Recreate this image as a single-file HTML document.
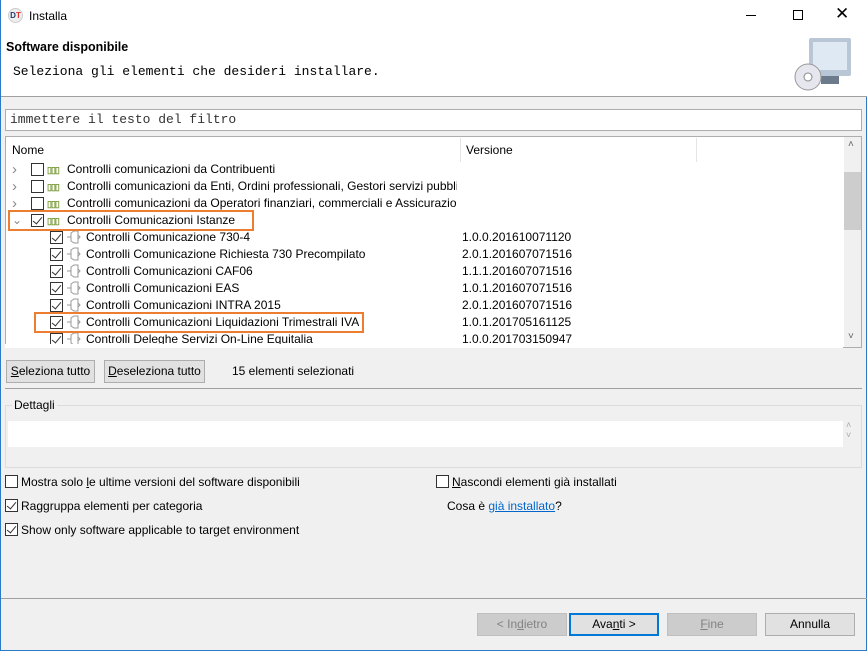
<!DOCTYPE html>
<html><head><style>
*{box-sizing:border-box;margin:0;padding:0}
body{width:867px;height:651px;overflow:hidden;background:#f0f0f0;font-family:"Liberation Sans",sans-serif;font-size:12px;color:#000;position:relative;border:1px solid #2b79c9;border-top:none}
.abs{position:absolute}
.cb{position:absolute;width:13px;height:13px;border:1px solid #333;background:#fff}
.cb.on::after{content:"";position:absolute;left:3px;top:0px;width:4px;height:8px;border:solid #333;border-width:0 1.5px 1.5px 0;transform:rotate(40deg)}
.row{position:absolute;height:17px;line-height:17px;white-space:nowrap}
.btn{position:absolute;height:23px;border:1px solid #adadad;background:#e1e1e1;text-align:center;line-height:21px}
</style></head><body>
<div class="abs" style="left:0;top:0;width:867px;height:97px;background:#fff;border-bottom:1px solid #a0a0a0"></div>
<div class="abs" style="left:7px;top:8px;width:15px;height:15px;border-radius:50%;background:#eee;border:1px solid #ccc;font-size:8px;font-weight:bold;line-height:13px;text-align:center;color:#1a3c6e">D<span style="color:#d33">T</span></div>
<div class="abs" style="left:28px;top:9px;font-size:12px">Installa</div>
<div class="abs" style="left:745px;top:15px;width:10px;height:1px;background:#000"></div>
<div class="abs" style="left:792px;top:10px;width:10px;height:10px;border:1px solid #000"></div>
<div class="abs" style="left:834px;top:4px;font-size:17px;line-height:20px">✕</div>
<div class="abs" style="left:5px;top:40px;font-weight:bold;font-size:12.5px">Software disponibile</div>
<div class="abs" style="left:12px;top:64px;font-family:'Liberation Mono',monospace;font-size:13px">Seleziona gli elementi che desideri installare.</div>
<svg class="abs" style="left:790px;top:34px" width="60" height="60"><rect x="18" y="4" width="42" height="38" rx="2" fill="#b9c6d6"/><rect x="22" y="8" width="34" height="28" fill="#dfe9f4"/><rect x="30" y="42" width="18" height="8" fill="#6b7b8c"/><circle cx="17" cy="43" r="13" fill="#e6e6ef" stroke="#999"/><circle cx="17" cy="43" r="4" fill="#fff" stroke="#888"/></svg>
<div class="abs" style="left:4px;top:109px;width:857px;height:22px;background:#fff;border:1px solid #adadad;font-family:'Liberation Mono',monospace;font-size:13px;line-height:20px;padding-left:4px;color:#333">immettere il testo del filtro</div>
<div class="abs" style="left:4px;top:136px;width:857px;height:212px;background:#fff;border:1px solid #adadad;overflow:hidden">
 <div class="abs" style="left:6px;top:6px">Nome</div>
 <div class="abs" style="left:454px;top:1px;width:1px;height:24px;background:#e5e5e5"></div>
 <div class="abs" style="left:460px;top:6px">Versione</div>
 <div class="abs" style="left:690px;top:1px;width:1px;height:24px;background:#e5e5e5"></div>
 <div class="abs" style="left:838px;top:0;width:17px;height:210px;background:#f0f0f0"></div>
 <div class="abs" style="left:838px;top:35px;width:17px;height:58px;background:#cdcdcd"></div>
 <div class="abs" style="left:842px;top:2px;font-size:10px;color:#606060">˄</div>
 <div class="abs" style="left:842px;top:194px;font-size:10px;color:#606060">˅</div>
</div>
<div id="tree"></div>
<div class="abs" style="left:7px;top:210px;width:246px;height:21px;border:2px solid #ed7d31"></div>
<div class="abs" style="left:33px;top:312px;width:330px;height:21px;border:2px solid #ed7d31"></div>
<script>
var rows=[
[0,'›',0,'Controlli comunicazioni da Contribuenti',''],
[0,'›',0,'Controlli comunicazioni da Enti, Ordini professionali, Gestori servizi pubbli',''],
[0,'›',0,'Controlli comunicazioni da Operatori finanziari, commerciali e Assicurazion',''],
[0,'⌄',1,'Controlli Comunicazioni Istanze',''],
[1,'',1,'Controlli Comunicazione 730-4','1.0.0.201610071120'],
[1,'',1,'Controlli Comunicazione Richiesta 730 Precompilato','2.0.1.201607071516'],
[1,'',1,'Controlli Comunicazioni CAF06','1.1.1.201607071516'],
[1,'',1,'Controlli Comunicazioni EAS','1.0.1.201607071516'],
[1,'',1,'Controlli Comunicazioni INTRA 2015','2.0.1.201607071516'],
[1,'',1,'Controlli Comunicazioni Liquidazioni Trimestrali IVA','1.0.1.201705161125'],
[1,'',1,'Controlli Deleghe Servizi On-Line Equitalia','1.0.0.201703150947']];
var h='';
rows.forEach(function(r,i){var y=161+i*17+(i==10?0:0);var x=r[0]?49:30;
if(r[1])h+='<div class="row" style="left:11px;top:'+y+'px;color:#888;font-size:'+(r[1]=='›'?'15px':'12px')+'">'+r[1]+'</div>';
h+='<div class="cb'+(r[2]?' on':'')+'" style="left:'+x+'px;top:'+(y+2)+'px"></div>';
if(r[0])h+='<svg class="abs" style="left:'+(x+16)+'px;top:'+(y+1)+'px" width="16" height="14"><path d="M1 7h4M5 3l3-2h4v12h-4l-3-2z" fill="none" stroke="#999"/><path d="M12 5l2 2-2 2" fill="none" stroke="#999"/></svg>';
else h+='<div class="abs" style="left:'+(x+16)+'px;top:'+(y+4)+'px;font-size:9px;letter-spacing:-1px;color:#7a9a3a;font-weight:bold">▯▯▯</div>';
h+='<div class="row" style="left:'+(r[0]?85:66)+'px;top:'+y+'px;max-width:'+(456-(r[0]?85:66))+'px;overflow:hidden">'+r[3]+'</div>';
if(r[4])h+='<div class="row" style="left:461px;top:'+y+'px">'+r[4]+'</div>';});
document.getElementById('tree').innerHTML=h;
</script>
<div class="abs" style="left:4px;top:344px;width:838px;height:4px;background:#fff"></div>
<div class="btn" style="left:5px;top:360px;width:89px"><u>S</u>eleziona tutto</div>
<div class="btn" style="left:103px;top:360px;width:101px"><u>D</u>eseleziona tutto</div>
<div class="abs" style="left:231px;top:364px">15 elementi selezionati</div>
<div class="abs" style="left:4px;top:388px;width:857px;height:1px;background:#a0a0a0"></div>
<div class="abs" style="left:4px;top:405px;width:857px;height:63px;border:1px solid #dcdcdc"></div>
<div class="abs" style="left:11px;top:398px;background:#f0f0f0;padding:0 2px">Dettagli</div>
<div class="abs" style="left:7px;top:421px;width:835px;height:26px;background:#fff"></div>
<div class="abs" style="left:845px;top:420px;font-size:9px;color:#aaa;line-height:10px">˄<br>˅</div>
<div class="cb" style="left:4px;top:475px"></div><div class="abs" style="left:20px;top:475px">Mostra solo <u>l</u>e ultime versioni del software disponibili</div>
<div class="cb on" style="left:4px;top:499px"></div><div class="abs" style="left:20px;top:499px">Ra<u>g</u>gruppa elementi per categoria</div>
<div class="cb on" style="left:4px;top:523px"></div><div class="abs" style="left:20px;top:523px">Show only software applicable to target environment</div>
<div class="cb" style="left:435px;top:475px"></div><div class="abs" style="left:451px;top:475px"><u>N</u>ascondi elementi già installati</div>
<div class="abs" style="left:446px;top:499px">Cosa è <span style="color:#0066cc;text-decoration:underline">già installato</span>?</div>
<div class="abs" style="left:0;top:598px;width:867px;height:1px;background:#a0a0a0"></div>
<div class="btn" style="left:476px;top:613px;width:90px;background:#ccc;border-color:#bfbfbf;color:#838383">&lt; In<u>d</u>ietro</div>
<div class="btn" style="left:568px;top:613px;width:90px;border:2px solid #0078d7;line-height:19px">Ava<u>n</u>ti &gt;</div>
<div class="btn" style="left:666px;top:613px;width:90px;background:#ccc;border-color:#bfbfbf;color:#838383"><u>F</u>ine</div>
<div class="btn" style="left:764px;top:613px;width:90px">Annulla</div>
</body></html>
